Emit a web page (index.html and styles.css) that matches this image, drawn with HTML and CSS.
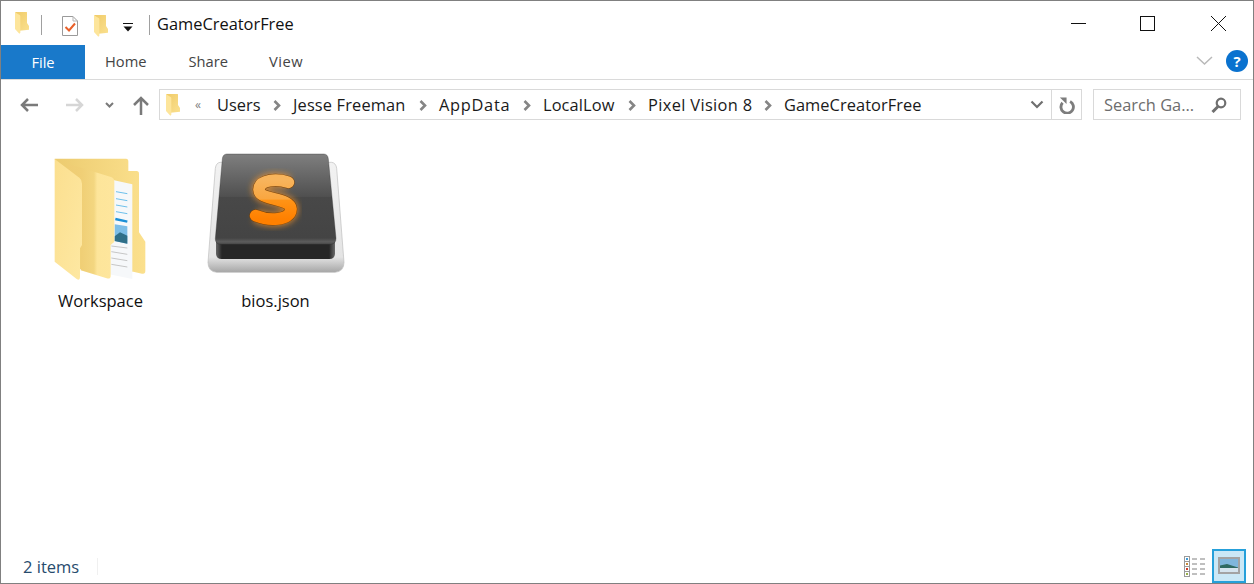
FILE: index.html
```html
<!DOCTYPE html>
<html lang="en">
<head>
<meta charset="utf-8">
<title>GameCreatorFree</title>
<link rel="stylesheet" href="styles.css">
</head>
<body>
<svg class="defs" width="0" height="0" aria-hidden="true">
  <defs>
    <symbol id="chev" viewBox="0 0 8 11">
      <path d="M1.500 1L6 5.500L1.500 10" fill="none" stroke="#858585" stroke-width="2.600"/>
    </symbol>
    <linearGradient id="small-back" x1="0" y1="0" x2="1" y2="1"><stop offset="0" stop-color="#f0cb68"/><stop offset="1" stop-color="#fae08f"/></linearGradient>
    <symbol id="small-folder" viewBox="0 0 42 66">
      <path d="M1 0H35Q36 0 36 2V33L42 42V53L14 56L1 50Z" fill="url(#small-back)"/>
      <path d="M0 1L14 9Q16 10 16 13V62L13 65L0 51Z" fill="#fde59b"/>
    </symbol>
    <linearGradient id="folder-back" x1="0" y1="0" x2="1" y2="0"><stop offset="0" stop-color="#eccb6f"/><stop offset="1" stop-color="#fbe08d"/></linearGradient>
    <linearGradient id="folder-mid" x1="0" y1="0" x2="1" y2="0"><stop offset="0" stop-color="#efcd74"/><stop offset=".3" stop-color="#f0cf76"/><stop offset=".56" stop-color="#f3d680"/><stop offset=".63" stop-color="#fde59a"/><stop offset="1" stop-color="#fee69d"/></linearGradient>
    <linearGradient id="folder-front" x1="0" y1="0" x2="1" y2="1"><stop offset="0" stop-color="#fbdf8f"/><stop offset="1" stop-color="#fee8a2"/></linearGradient>
    <linearGradient id="key-top" x1="0" y1="0" x2="0" y2="1"><stop offset="0" stop-color="#7f7f7f"/><stop offset=".47" stop-color="#505050"/><stop offset=".48" stop-color="#484848"/><stop offset=".93" stop-color="#444"/><stop offset=".97" stop-color="#5c5c5c"/><stop offset="1" stop-color="#4a4a4a"/></linearGradient>
    <linearGradient id="key-side" x1="0" y1="0" x2="1" y2="0"><stop offset="0" stop-color="#666"/><stop offset=".05" stop-color="#262626"/><stop offset=".95" stop-color="#262626"/><stop offset="1" stop-color="#6a6a6a"/></linearGradient>
    <linearGradient id="key-base" x1="0" y1="0" x2="0" y2="1"><stop offset="0" stop-color="#f2f2f2"/><stop offset=".86" stop-color="#e4e4e4"/><stop offset="1" stop-color="#a6a6a6"/></linearGradient>
    <linearGradient id="s-fill" x1="0" y1="0" x2="0" y2="1"><stop offset="0" stop-color="#f8b45c"/><stop offset=".48" stop-color="#f9a640"/><stop offset=".52" stop-color="#ff9316"/><stop offset="1" stop-color="#ff8000"/></linearGradient>
    <filter id="s-glow" x="-30%" y="-30%" width="160%" height="160%"><feGaussianBlur stdDeviation="9"/></filter>
  </defs>
</svg>
<div class="window">
  <header class="titlebar">
    <div class="qat">
      <svg class="ico-folder-sm" width="14" height="22"><use href="#small-folder"/></svg>
      <span class="sep sep-first"></span>
      <svg class="ico-check" width="18" height="22" viewBox="0 0 18 22">
        <path d="M1.500 1.500H12L16.500 6V20.500H1.500Z" fill="#fff" stroke="#9a9a9a"/>
        <path d="M12 1.500V6H16.500" fill="none" stroke="#b5b5b5"/>
        <path d="M4.500 12L8 15.500L14 8.500" fill="none" stroke="#e8602a" stroke-width="2"/>
      </svg>
      <svg class="ico-folder-sm2" width="14" height="22"><use href="#small-folder"/></svg>
      <svg class="ico-drop" width="10" height="9" viewBox="0 0 10 9">
        <path d="M0 0.500H10" stroke="#111" fill="none"/>
        <path d="M0.500 3.500H9.500L5 8.500Z" fill="#111"/>
      </svg>
      <span class="sep sep-last"></span>
    </div>
    <div class="title">GameCreatorFree</div>
    <div class="winbtns">
      <svg class="btn-min" width="15" height="15" viewBox="0 0 15 15"><path d="M0 7.500H15" stroke="#111"/></svg>
      <svg class="btn-max" width="15" height="15" viewBox="0 0 15 15"><rect x=".5" y=".5" width="14" height="14" fill="none" stroke="#111"/></svg>
      <svg class="btn-close" width="15" height="15" viewBox="0 0 15 15"><path d="M0 0L15 15M15 0L0 15" stroke="#111"/></svg>
    </div>
  </header>
  <nav class="ribbon">
    <div class="tab tab-file">File</div>
    <div class="tab tab-home">Home</div>
    <div class="tab tab-share">Share</div>
    <div class="tab tab-view">View</div>
    <svg class="chev-ribbon" width="17" height="10" viewBox="0 0 17 10"><path d="M1 1L8.500 8L16 1" fill="none" stroke="#b9b9b9" stroke-width="1.500"/></svg>
    <div class="help">?</div>
  </nav>
  <div class="addressrow">
    <svg class="nav nav-back" width="20" height="16" viewBox="0 0 20 16"><path d="M19 8H3M9 2L3 8L9 14" fill="none" stroke="#7a7a7a" stroke-width="2.500"/></svg>
    <svg class="nav nav-fwd" width="20" height="16" viewBox="0 0 20 16"><path d="M1 8H17M11 2L17 8L11 14" fill="none" stroke="#d6d6d6" stroke-width="2.500"/></svg>
    <svg class="nav nav-drop" width="9" height="6" viewBox="0 0 9 6"><path d="M1 1L4.500 4.500L8 1" fill="none" stroke="#7a7a7a" stroke-width="2"/></svg>
    <svg class="nav nav-up" width="18" height="19" viewBox="0 0 18 19"><path d="M9 19V3M2 9L9 2L16 9" fill="none" stroke="#7a7a7a" stroke-width="2.500"/></svg>
    <div class="addressbox">
      <svg class="addr-folder" width="14" height="22"><use href="#small-folder"/></svg>
      <span class="laquo">«</span>
      <span class="crumb c-users">Users</span>
      <svg class="crumb-chev" width="8" height="11"><use href="#chev"/></svg>
      <span class="crumb c-jesse">Jesse Freeman</span>
      <svg class="crumb-chev" width="8" height="11"><use href="#chev"/></svg>
      <span class="crumb c-appdata">AppData</span>
      <svg class="crumb-chev" width="8" height="11"><use href="#chev"/></svg>
      <span class="crumb c-locallow">LocalLow</span>
      <svg class="crumb-chev" width="8" height="11"><use href="#chev"/></svg>
      <span class="crumb c-pixel">Pixel Vision 8</span>
      <svg class="crumb-chev" width="8" height="11"><use href="#chev"/></svg>
      <span class="crumb c-game">GameCreatorFree</span>
      <svg class="addr-drop" width="14" height="9" viewBox="0 0 14 9"><path d="M1.500 1.500L7 7L12.500 1.500" fill="none" stroke="#6f6f6f" stroke-width="2.200"/></svg>
      <div class="refresh">
        <svg width="16" height="18" viewBox="0 0 18 20"><path d="M4 7.500A7 7 0 1 0 12.500 6" fill="none" stroke="#7d7d7d" stroke-width="3.200"/><path d="M1 1.500H8.500V9Z" fill="#7d7d7d"/></svg>
      </div>
    </div>
    <div class="searchbox">
      <span class="searchtext">Search Ga...</span>
      <svg width="16" height="16" viewBox="0 0 16 16"><circle cx="10" cy="6" r="4.300" fill="none" stroke="#6f6f6f" stroke-width="2.200"/><path d="M7 9.500L1.500 15" stroke="#6f6f6f" stroke-width="3"/></svg>
    </div>
  </div>
  <main class="files">
    <div class="item">
      <div class="thumbbox">
        <svg class="thumb thumb-folder" width="96" height="128" viewBox="36 36 288 384">
          <path d="M44 41H258Q265 41 265 49V78H290Q297 78 297 86V262L316 290V378Q316 388 306 386L280 380L120 372Z" fill="url(#folder-back)"/>
          <path d="M222 106L277 118V402L208 388V300L222 290Z" fill="#f6f8fa"/>
          <g stroke="#52b5e8" stroke-width="2.500">
            <path d="M228 140L262 146M228 161L262 167M228 180L262 186M228 200L262 206"/>
          </g>
          <path d="M226 222L262 230" stroke="#1b8fd6" stroke-width="7"/>
          <path d="M224 238L262 244V296L224 288Z" fill="#7cbde6"/>
          <path d="M224 274L240 262L262 272V296L224 288Z" fill="#2f6f88"/>
          <g stroke="#bcbcbc" stroke-width="2.500">
            <path d="M214 303L262 309M214 320L262 328M214 339L262 347M214 358L262 366"/>
          </g>
          <path d="M84 56L213 96Q223 99 223 110V290L212 300V392Q212 403 200 400L122 376V308L84 120Z" fill="url(#folder-mid)"/>
          <path d="M44 42L118 98Q126 104 126 116V300L120 310V396Q120 408 110 402L44 350Z" fill="url(#folder-front)"/>
        </svg>
      </div>
      <div class="label">Workspace</div>
    </div>
    <div class="item">
      <div class="thumbbox">
        <svg class="thumb thumb-sublime" width="140" height="124" viewBox="18 24 420 372">
          <path d="M60 52H395Q408 54 410 70L432 352Q432 380 405 382H50Q24 380 24 352L46 70Q48 54 60 52Z" fill="url(#key-base)" stroke="#bdbdbd" stroke-width="2"/>
          <path d="M48 285H405V325Q405 342 388 342H65Q48 342 48 325Z" fill="url(#key-side)"/>
          <path d="M80 27H372Q384 28 385 42L408 280Q408 297 392 298H62Q45 297 46 280L67 42Q68 28 80 27Z" fill="url(#key-top)" stroke="#2c2c2c" stroke-width="1"/>
          <path d="M265 112C230 100 178 104 177 134C178 168 270 156 273 192C272 228 205 228 167 212" fill="none" stroke="#ff9a2a" stroke-opacity=".75" stroke-width="42" filter="url(#s-glow)"/>
          <path d="M265 112C230 100 178 104 177 134C178 168 270 156 273 192C272 228 205 228 167 212" fill="none" stroke="#7a4208" stroke-width="38" stroke-linecap="round"/>
          <path d="M265 112C230 100 178 104 177 134C178 168 270 156 273 192C272 228 205 228 167 212" fill="none" stroke="url(#s-fill)" stroke-width="35" stroke-linecap="round"/>
        </svg>
      </div>
      <div class="label">bios.json</div>
    </div>
  </main>
  <footer class="status">
    <span class="count">2 items</span>
    <span class="status-sep"></span>
    <svg class="view-details" width="22" height="21" viewBox="0 0 22 21">
      <g fill="#fff" stroke="#9a9a9a"><rect x=".5" y=".5" width="5" height="5"/><rect x=".5" y="5.500" width="5" height="5"/><rect x=".5" y="10.500" width="5" height="5"/><rect x=".5" y="15.500" width="5" height="5"/></g>
      <rect x="2" y="2" width="2" height="2" fill="#3f9bd6"/><rect x="2" y="7" width="2" height="2" fill="#c98a3a"/><rect x="2" y="12" width="2" height="2" fill="#d03a2a"/><rect x="2" y="17" width="2" height="2" fill="#9ab04a"/>
      <path d="M8 3H13M16 3H21M8 8H13M16 8H21M8 13H13M16 13H21M8 18H13M16 18H21" stroke="#808080"/>
    </svg>
    <div class="view-large">
      <svg width="22" height="17" viewBox="0 0 22 17">
        <rect x="1" y="1" width="20" height="15" fill="#fff" stroke="#a3a3a3" stroke-width="2"/>
        <rect x="2" y="2" width="18" height="13" fill="#7fb6dc"/>
        <path d="M2 8.500L9 7L20 10.500V12H2Z" fill="#2f6a62"/>
        <path d="M2 11H20V15H2Z" fill="#d5e4ee"/>
      </svg>
    </div>
  </footer>
</div>
</body>
</html>
```
FILE: styles.css
```css
* { box-sizing: border-box; }
html, body { margin: 0; height: 100%; }
body { font-family: "Open Sans", "Noto Sans", sans-serif; background: #fff; color: #000; overflow: hidden; }
.defs { display: block; height: 0; }
.window { width: 1254px; height: 584px; border: 1px solid #808080; display: flex; flex-direction: column; background: #fff; }

.titlebar { height: 44px; display: flex; align-items: center; flex: none; }
.qat { display: flex; align-items: center; }
.qat svg { display: block; }
.ico-folder-sm { margin-left: 14px; margin-top: -1px; }
.sep { width: 1px; height: 20px; background: #a0a0a0; display: block; }
.sep-first { margin-left: 12px; margin-top: 4px; }
.ico-check { margin-left: 19px; margin-top: 5px; }
.ico-folder-sm2 { margin-left: 15px; margin-top: 5px; }
.ico-drop { margin-left: 15px; margin-top: 8px; }
.sep-last { margin-left: 16px; margin-top: 4px; }
.title { margin-left: 7px; font-size: 16.4px; color: #111; }
.winbtns { margin-left: auto; display: flex; margin-right: 27px; margin-top: 1px; align-items: center; }
.winbtns svg { display: block; }
.btn-max { margin-left: 54px; }
.btn-close { margin-left: 56px; }

.ribbon { height: 35px; flex: none; display: flex; align-items: center; border-bottom: 1px solid #dadada; position: relative; }
.tab { font-size: 14.7px; color: #444; margin-top: -2px; }
.tab-file { width: 84px; height: 34px; margin-top: 0; background: #1979ca; color: #fff; display: flex; align-items: center; justify-content: center; }
.tab-home { margin-left: 20px; }
.tab-share { margin-left: 42px; }
.tab-view { margin-left: 41px; letter-spacing: 0.5px; }
.chev-ribbon { margin-left: auto; margin-top: -2px; }
.help { width: 22px; height: 22px; border-radius: 50%; background: #0a72cf; color: #fff; font-weight: 700; font-size: 15px; line-height: 22px; text-align: center; margin-left: 13px; margin-right: 5px; margin-top: -2px; }

.addressrow { height: 49px; flex: none; display: flex; align-items: center; }
.nav { display: block; flex: none; }
.nav-back { margin-left: 18px; margin-top: 1px; }
.nav-fwd { margin-left: 26px; margin-top: 1px; }
.nav-drop { margin-left: 20px; margin-top: 1px; }
.nav-up { margin-left: 18px; margin-top: 1px; }
.addressbox { margin-left: 9px; width: 923px; height: 31px; border: 1px solid #d9d9d9; display: flex; align-items: center; font-size: 16.4px; color: #1a1a1a; }
.addr-folder { margin-left: 6px; flex: none; }
.laquo { margin-left: 15px; color: #808080; font-size: 12px; width: 22px; }
.crumb { display: block; white-space: nowrap; }
.c-users { width: 43px; }
.c-jesse { width: 113px; letter-spacing: 0.15px; }
.c-appdata { width: 71px; letter-spacing: 0.7px; }
.c-locallow { width: 72px; letter-spacing: 0.1px; }
.c-pixel { width: 103px; letter-spacing: 0.35px; }
.c-game { width: 137px; letter-spacing: 0.05px; }
.crumb-chev { display: block; flex: none; margin: 1px 12px 0 13px; }
.addr-drop { margin-left: auto; margin-right: 7px; }
.refresh { width: 30px; height: 29px; border-left: 1px solid #d9d9d9; display: flex; align-items: center; justify-content: center; }
.searchbox { margin-left: 11px; width: 148px; height: 31px; border: 1px solid #d9d9d9; display: flex; align-items: center; justify-content: space-between; padding: 0 13px 0 10px; font-size: 16.4px; color: #6d6d6d; }

.files { flex: 1; display: flex; padding: 24px 0 0 12px; align-items: flex-start; }
.item { width: 175px; display: flex; flex-direction: column; align-items: center; }
.thumbbox { height: 132px; display: flex; justify-content: center; }
.thumb { display: block; }
.thumb-folder { margin-top: 4px; margin-left: -1px; }
.label { font-size: 16.5px; line-height: 22px; color: #111; margin-top: 5px; }

.status { height: 34px; flex: none; display: flex; align-items: center; position: relative; }
.count { margin-left: 22px; font-size: 16.5px; color: #274b6d; }
.status-sep { width: 1px; height: 17px; margin-left: 18px; background: #f0f0f0; }
.view-details { margin-left: auto; display: block; }
.view-large { width: 34px; height: 34px; margin-left: 6px; margin-right: 7px; margin-top: -1px; background: #cbe8f6; border: 2px solid #26a0da; display: flex; align-items: center; justify-content: flex-start; padding-left: 4px; }
.view-large svg { display: block; }
```
